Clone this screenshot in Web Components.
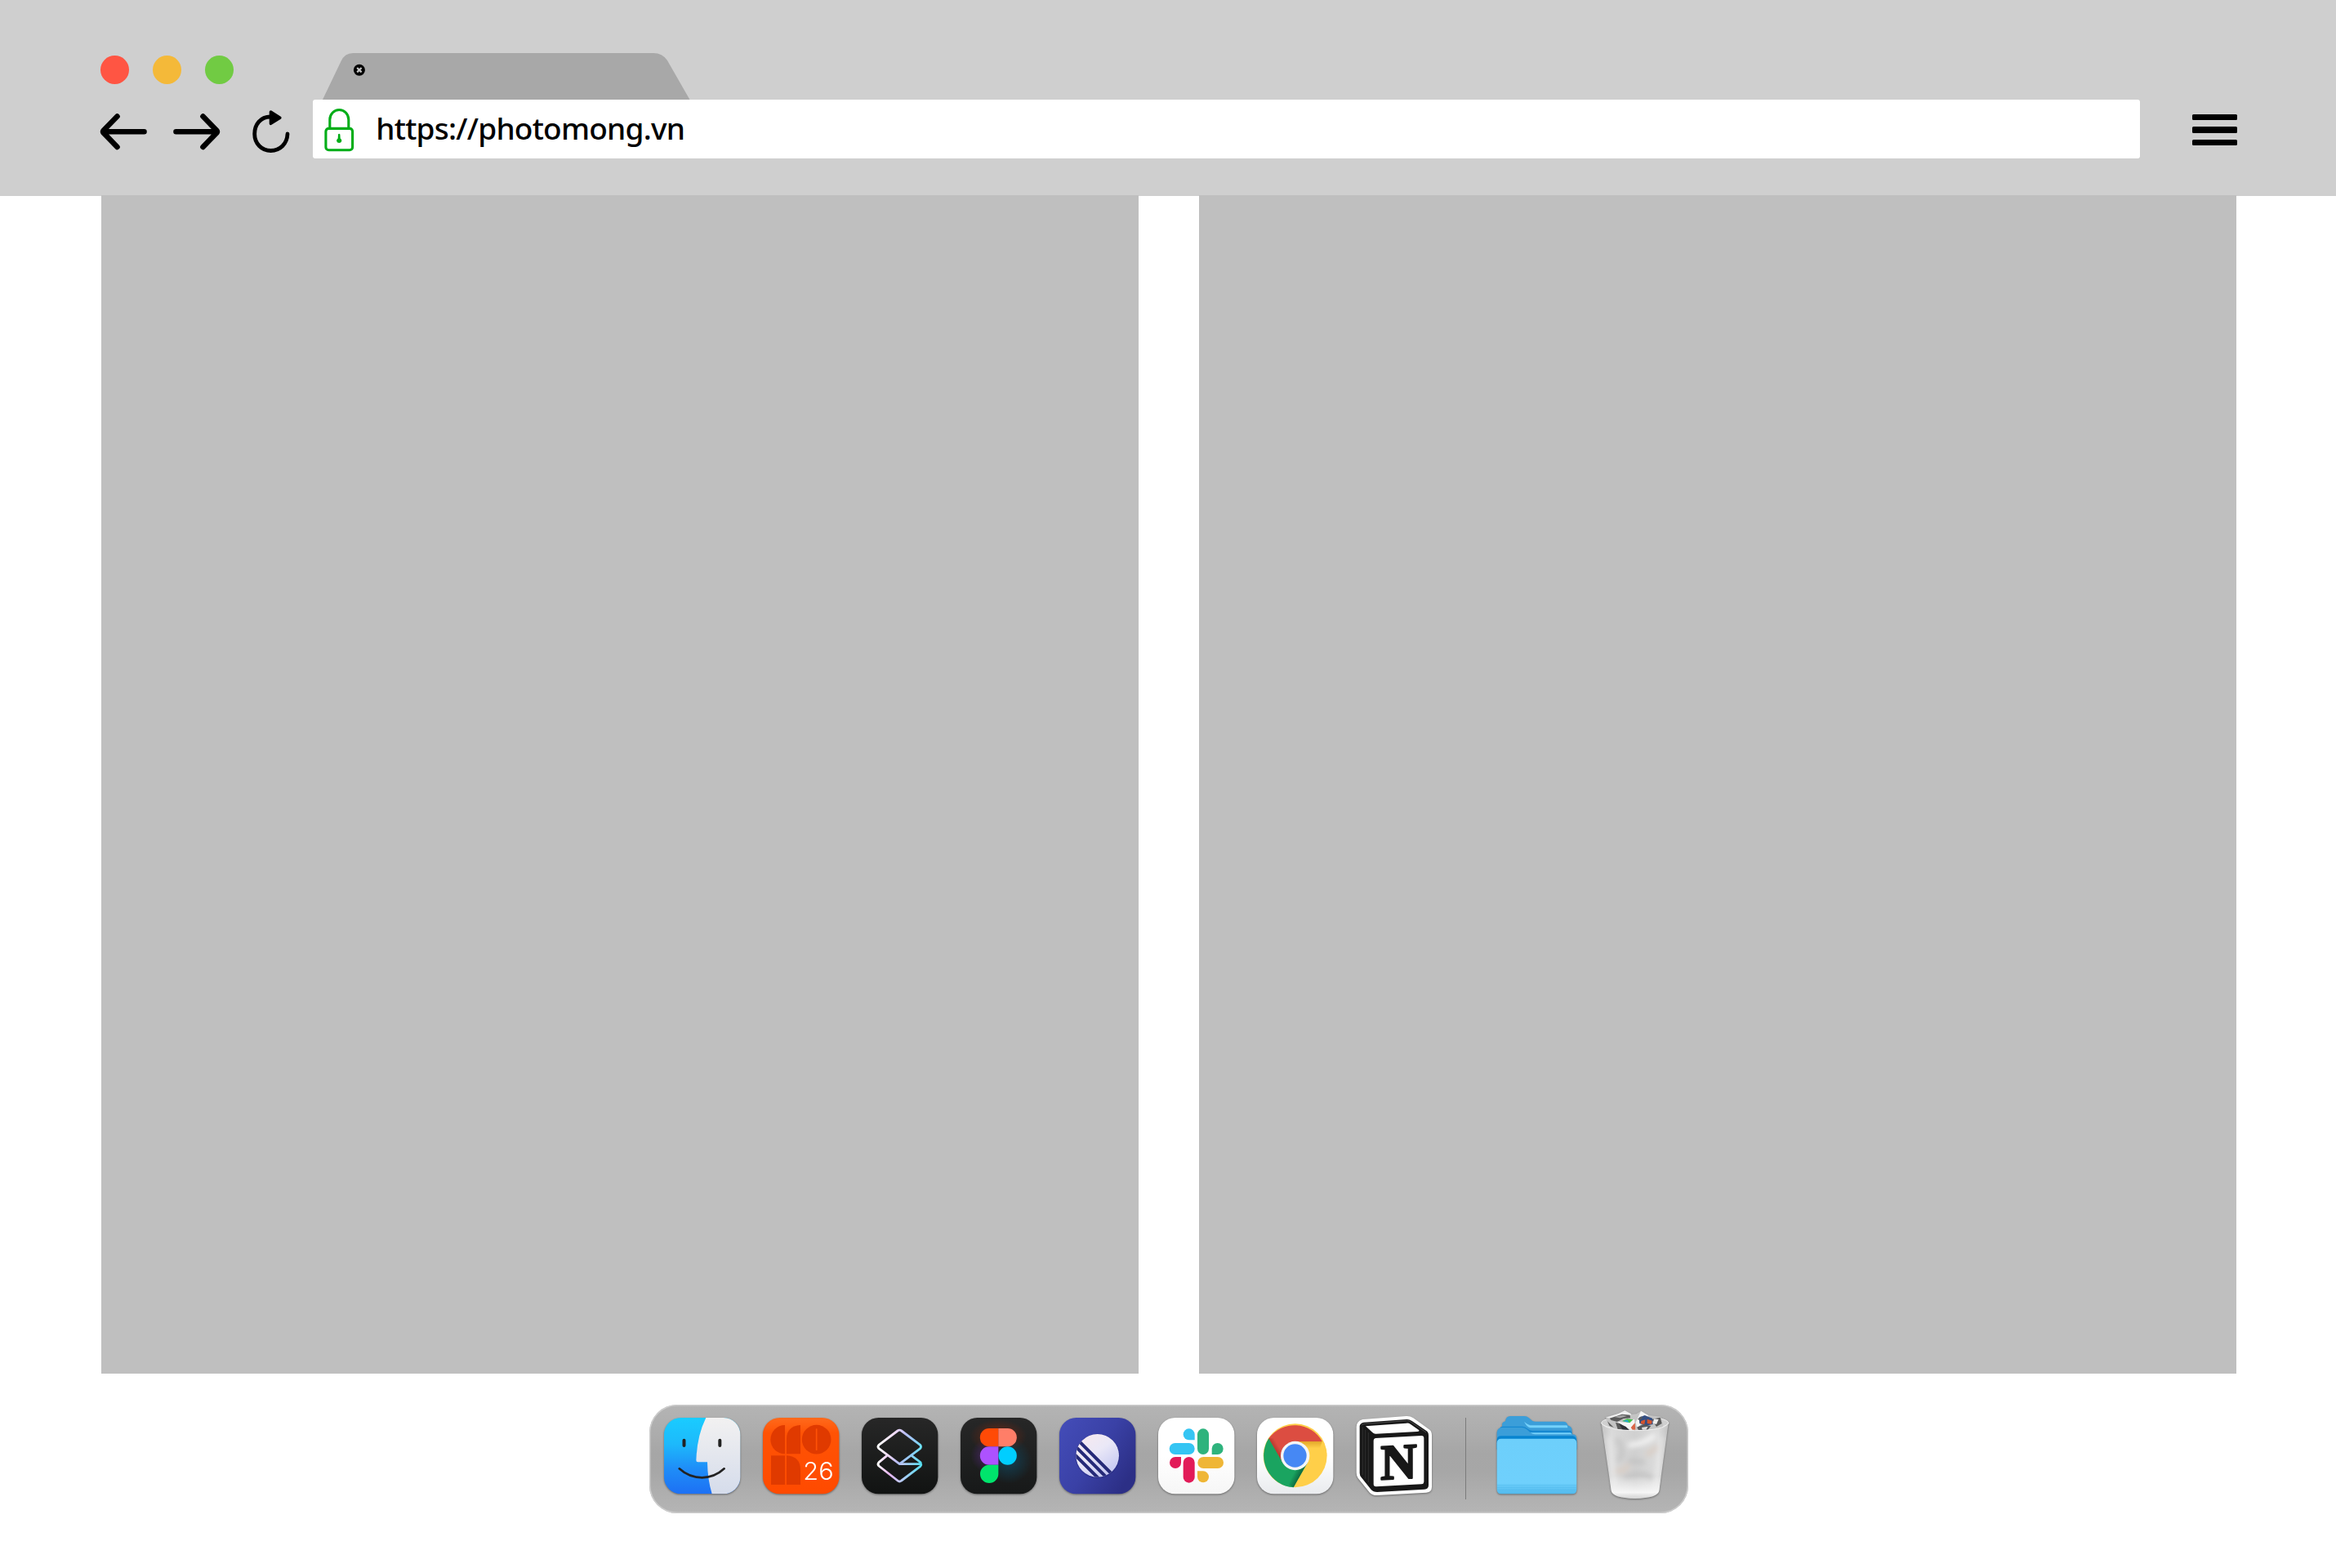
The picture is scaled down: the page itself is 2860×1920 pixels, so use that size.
<!DOCTYPE html>
<html lang="en">
<head>
<meta charset="utf-8">
<title>photomong.vn</title>
<style>
html,body{margin:0;width:2860px;height:1920px;overflow:hidden;background:#fff}
</style>
</head>
<body>
<browser-window>
  <browser-header slot="header"></browser-header>
  <photo-panel></photo-panel>
  <photo-panel></photo-panel>
  <app-dock slot="dock"></app-dock>
</browser-window>
<script>
const define = (name, css, html) => customElements.define(name, class extends HTMLElement {
  constructor(){
    super();
    this.attachShadow({mode:'open'}).innerHTML = `<style>${css} svg{display:block;overflow:visible}</style>${html}`;
  }
});

define('browser-window', `
:host{display:flex;flex-direction:column;width:2860px;height:1920px;background:#fff}
main{display:flex;gap:74px;padding:0 122px 0 124px;height:1443px;margin-top:-1px}
.dock{display:flex;padding:38px 0 0 795px}`,
`<slot name="header"></slot><main><slot></slot></main><div class="dock"><slot name="dock"></slot></div>`);

define('photo-panel', `:host{display:block;flex:1;background:#bfbfbf}`, ``);

define('traffic-lights', `
:host{display:flex;gap:28.900px;padding:0 0 0 123px}
i{flex:none;width:35px;height:35px;border-radius:50%;background:#ff5543}
i:nth-of-type(2){background:#f4b939}
i:nth-of-type(3){background:#71cb43}`, `<i></i><i></i><i></i>`);

define('browser-tab', `:host{display:block}`, `
<svg width="450" height="57" viewBox="395 65 450 57">
<path d="M395 122L417.500 75Q422 65 432 65H800Q811 65 817 74L844.500 122Z" fill="#a8a8a8"/>
<circle cx="439.900" cy="85.700" r="7"/><path d="M437.200 83L442.600 88.400M442.600 83L437.200 88.400" stroke="#c4c4c4" stroke-width="2.200"/>
</svg>`);

define('nav-buttons', `:host{display:flex;width:260px;height:72px}`, `
<svg width="260" height="72" viewBox="123 122 260 72" fill="none" stroke="#000" stroke-width="6.600" stroke-linecap="round" stroke-linejoin="round">
<path d="M176.500 161.200H127M143.500 142.500L126.500 160Q125.700 161.200 126.500 162.400L143.500 180"/>
<path d="M215.500 161.200H265M248.500 142.500L265.500 160Q266.300 161.200 265.500 162.400L248.500 180"/>
<path d="M331 143C319 143 311.700 152.500 311.700 164C311.700 176 320.500 184.500 331.500 184.500C343 184.500 351.500 176 352 164" stroke-width="4.800"/>
<path d="M331.500 137L342.800 144.200L331.500 151.300Z" fill="#000" stroke-width="3.600"/>
</svg>`);

define('address-bar', `
:host{display:flex;align-items:flex-start;box-sizing:border-box;width:2237px;height:72px;background:#fff;border-radius:3px;padding:11px 0 0 14px}
span{font:500 37px/50px "Noto Sans","Open Sans",sans-serif;letter-spacing:-.76px;margin:-1px 0 0 27.300px;white-space:nowrap;color:#000}`, `
<svg width="36" height="52" viewBox="397 133 36 52" fill="none" stroke="#00ad17" stroke-width="3.100">
<path d="M403.800 157V146.500A11.500 12 0 0 1 426.800 146.500V157"/>
<rect x="398.900" y="157.400" width="32.700" height="26.300" rx="3.500"/>
<path d="M414 164.500Q415.200 163 416.400 164.500L416.700 169.500Q418.700 171 418.300 172.800Q417.700 175 415.200 175Q412.700 175 412.100 172.800Q411.700 171 413.700 169.500Z" fill="#00ad17" stroke="none"/>
</svg><span>https://photomong.vn</span>`);

define('menu-button', `:host{display:flex;flex-direction:column;gap:8px;padding-top:17.500px}
i{width:54.500px;height:7.600px;border-radius:1.500px;background:#000}`, `<i></i><i></i><i></i>`);

define('browser-header', `
:host{display:flex;flex-direction:column;box-sizing:border-box;width:2860px;height:240px;background:#cfcfcf;padding-top:65px}
.top{display:flex;height:57px}
traffic-lights{width:163px;padding-top:3px;margin-right:109px}
.bar{display:flex;padding-left:123px;height:72px}
menu-button{margin-left:64px}`, `
<div class="top"><traffic-lights></traffic-lights><browser-tab></browser-tab></div>
<div class="bar"><nav-buttons></nav-buttons><address-bar></address-bar><menu-button></menu-button></div>`);

/* App icons are drawn on a 280-unit tile. */
const icon = (name, view, html, w = 93.33, h = 93.33) => define('icon-' + name,
  `:host{display:block;width:${w}px;height:${h}px;filter:drop-shadow(0 1px 1px #0006)}`,
  `<svg width="${w}" height="${h}" viewBox="${view}">${html}</svg>`);

icon('finder', '98 108 280 280', `
<defs><linearGradient id="b" x2="0" y2="1"><stop offset="0" stop-color="#1accff"/><stop offset=".35" stop-color="#1db9fb"/><stop offset=".65" stop-color="#1f8ff8"/><stop offset="1" stop-color="#1d70f4"/></linearGradient>
<linearGradient id="w" x2="0" y2="1"><stop offset="0" stop-color="#f2f1f1"/><stop offset="1" stop-color="#d5dceb"/></linearGradient>
<clipPath id="c"><rect x="98" y="108" width="280" height="280" rx="62"/></clipPath></defs>
<g clip-path="url(#c)"><rect x="98" y="108" width="280" height="280" fill="url(#b)"/>
<path d="M252 108Q219 175 216 264Q216 271 222 271H257Q258 335 274 388H380V108Z" fill="url(#w)"/></g>
<g fill="none" stroke="#222" stroke-linecap="round"><path d="M171.500 191V210M303 191V210" stroke-width="12"/><path d="M154 295Q190 328 238 328Q285 327 319 295" stroke-width="8"/></g>`);

icon('orange', '462 108 280 280', `
<defs><linearGradient id="o" x2="0" y2="1"><stop offset="0" stop-color="#ff6a1c"/><stop offset=".2" stop-color="#ff5305"/><stop offset="1" stop-color="#ff4a00"/></linearGradient></defs>
<rect x="462" y="108" width="280" height="280" rx="62" fill="url(#o)"/>
<g fill="#e03a00"><path d="M543 135V241A53 53 0 0 1 543 135Z"/><path d="M600 135V241H549V186Q549 139 600 135Z"/><circle cx="659" cy="188" r="53.500"/><path d="M492 247H543V354H492Z"/><path d="M549 247Q600 250 600 300V354H549Z"/></g>
<path d="M659 148V228" stroke="#ff5208" stroke-width="5"/>
<text x="610" y="336" font-family="Inter,'Liberation Sans',sans-serif" font-size="91" font-weight="300" fill="#fff" textLength="112" lengthAdjust="spacingAndGlyphs">26</text>`);

icon('stack', '75 78 280 280', `
<defs><linearGradient id="k" x2="0" y2="1"><stop offset="0" stop-color="#272727"/><stop offset="1" stop-color="#111312"/></linearGradient>
<linearGradient id="s" gradientUnits="userSpaceOnUse" x1="135" y1="180" x2="292" y2="225"><stop offset="0" stop-color="#fff"/><stop offset=".3" stop-color="#f0d9f8"/><stop offset=".5" stop-color="#bdbdf5"/><stop offset=".8" stop-color="#8bcdf8"/><stop offset="1" stop-color="#5feaf6"/></linearGradient>
<linearGradient id="t" gradientUnits="userSpaceOnUse" x1="135" y1="230" x2="294" y2="250"><stop offset="0" stop-color="#fff"/><stop offset=".3" stop-color="#e9b4f2"/><stop offset=".55" stop-color="#c2c8f6"/><stop offset="1" stop-color="#56def0"/></linearGradient></defs>
<rect x="75" y="78" width="280" height="280" rx="62" fill="url(#k)"/>
<g fill="none" stroke-width="8.500" stroke-linejoin="round"><path d="M168 217L138 242Q132 249 138 255L207 309Q214 315 221 309L290 257Q298 248 288 248H214M258 217L288 240Q294 244 291 249" stroke="url(#t)"/>
<path d="M207 126Q214 121 221 126L290 178Q295 185 290 191L214 248L138 191Q132 185 138 178Z" stroke="url(#s)"/></g>`);

icon('figma', '438 78 280 280', `
<defs><linearGradient id="k" x2="0" y2="1"><stop offset="0" stop-color="#272727"/><stop offset="1" stop-color="#171919"/></linearGradient>
<radialGradient id="r"><stop offset="0" stop-color="#a32a08" stop-opacity=".55"/><stop offset="1" stop-color="#a32a08" stop-opacity="0"/></radialGradient>
<radialGradient id="u"><stop offset="0" stop-color="#075f85" stop-opacity=".5"/><stop offset="1" stop-color="#075f85" stop-opacity="0"/></radialGradient>
<radialGradient id="p"><stop offset="0" stop-color="#6b2aa0" stop-opacity=".5"/><stop offset="1" stop-color="#6b2aa0" stop-opacity="0"/></radialGradient></defs>
<rect x="438" y="78" width="280" height="280" rx="62" fill="url(#k)"/>
<ellipse cx="577" cy="146" rx="105" ry="62" fill="url(#r)"/><circle cx="615" cy="235" r="85" fill="url(#u)"/><circle cx="535" cy="217" r="60" fill="url(#p)"/>
<path d="M577 117V184H543A33.500 33.500 0 0 1 543 117Z" fill="#ff4a06"/><path d="M577 117H611A33.500 33.500 0 0 1 611 184H577Z" fill="#ff7e68"/>
<path d="M577 184V251H543A33.500 33.500 0 0 1 543 184Z" fill="#ad52ff"/><circle cx="611" cy="217.500" r="33.500" fill="#00ceff"/>
<path d="M577 251V285A33.500 33.500 0 1 1 543 251Z" fill="#00e46c"/>`);

icon('linear', '81 78 280 280', `
<defs><linearGradient id="l" x2="1" y2=".65"><stop offset="0" stop-color="#444db9"/><stop offset=".55" stop-color="#3a41a6"/><stop offset="1" stop-color="#2c2f86"/></linearGradient>
<linearGradient id="m" x2=".7" y2="1"><stop offset="0" stop-color="#f9e9ee"/><stop offset=".5" stop-color="#eae8f7"/><stop offset="1" stop-color="#c5c8f2"/></linearGradient><clipPath id="c"><circle cx="221" cy="217" r="79"/></clipPath></defs>
<rect x="81" y="78" width="280" height="280" rx="62" fill="url(#l)"/>
<circle cx="221" cy="219" r="82" fill="#1c1f6e" opacity=".3"/>
<circle cx="221" cy="217" r="79" fill="url(#m)"/>
<g clip-path="url(#c)" stroke="#252a78" stroke-width="12"><path d="M150 161L280 291M138 181L260 303M130 206L230 306" /></g>`);

icon('slack', '444 78 280 280', `
<defs><linearGradient id="w" x2="0" y2="1"><stop offset=".5" stop-color="#fff"/><stop offset="1" stop-color="#f6f6f6"/></linearGradient></defs>
<rect x="444" y="78" width="280" height="280" rx="62" fill="url(#w)"/>
<g fill="#35c5f3"><path d="M578 160V139A21 21 0 1 0 557 160Z"/><rect x="485" y="171" width="93" height="42" rx="21"/></g>
<g fill="#2eb37d"><rect x="588" y="118" width="42" height="95" rx="21"/><path d="M641 213V192A21 21 0 1 1 662 213Z"/></g>
<g fill="#e21b58"><path d="M528 222V243A21 21 0 1 1 507 222Z"/><rect x="536" y="222" width="42" height="95" rx="21"/></g>
<g fill="#efb636"><rect x="589" y="222" width="95" height="42" rx="21"/><path d="M588 274H609A21 21 0 1 1 588 295Z"/></g>`);

icon('chrome', '418 78 280 280', `
<defs><linearGradient id="w" x2="0" y2="1"><stop offset=".5" stop-color="#fff"/><stop offset="1" stop-color="#e9ebee"/></linearGradient>
<linearGradient id="d" gradientUnits="userSpaceOnUse" x1="485" y1="200" x2="502" y2="190"><stop offset="0" stop-color="#9e2d22" stop-opacity=".65"/><stop offset="1" stop-color="#9e2d22" stop-opacity="0"/></linearGradient>
<linearGradient id="y" gradientUnits="userSpaceOnUse" x1="0" y1="165" x2="0" y2="190"><stop offset="0" stop-color="#d99a20" stop-opacity=".75"/><stop offset="1" stop-color="#d99a20" stop-opacity="0"/></linearGradient>
<linearGradient id="e" gradientUnits="userSpaceOnUse" x1="578" y1="289" x2="555" y2="277"><stop offset="0" stop-color="#064f31" stop-opacity=".7"/><stop offset="1" stop-color="#064f31" stop-opacity="0"/></linearGradient></defs>
<rect x="418" y="78" width="280" height="280" rx="62" fill="url(#w)"/>
<circle cx="558" cy="217" r="117" fill="#ffcf49"/>
<path d="M558 165H657.500L640 215L590 217Z" fill="url(#y)"/>
<path d="M461 154A117 117 0 0 0 552 334L603 244L558 217Z" fill="#1aa460"/>
<path d="M603 244L552 334L535 325L558 260Z" fill="url(#e)"/>
<path d="M461 154A117 117 0 0 1 657.500 165H558L513 244Z" fill="#dc4d41"/>
<path d="M461 154L513 244L530 210L500 154Z" fill="url(#d)"/>
<circle cx="558" cy="217.500" r="53" fill="#f5f6f7"/><circle cx="557.500" cy="217.500" r="42.500" fill="#4688f4"/>`);

icon('notion', '61 78 280 280', `
<path d="M63 112Q64 89 86 84L246 72Q260 71 272 79L328 119Q340 126 340 142V332Q340 351 320 353L140 363Q123 364 112 353L69 300Q63 292 63 280Z" fill="#fff"/>
<path d="M75 108Q77 97 91 95L247 84Q257 83 267 90L320 126Q328 131 328 143V326Q328 339 313 341L139 351Q125 351 117 342L81 297Q75 290 75 281Z" fill="#181818"/>
<path d="M97 109L247 98Q255 97 262 102L292 123Q297 128 286 129L135 137Q128 138 122 132Z" fill="#fff"/>
<path d="M133 153L302 144Q311 144 311 153V312Q311 321 302 322L135 331Q126 331 126 322V162Q126 154 133 153Z" fill="#fff"/>
<path d="M86 112V288M96 122V302M107 132V315" stroke="#303030" stroke-width="3" fill="none"/>
<path d="M82 105Q86 101 95 100L248 89Q256 88 264 94L319 132" stroke="#4a4a4a" stroke-width="3" fill="none"/>
<text transform="translate(152 305) skewY(-3)" font-family="'Liberation Serif',serif" font-weight="700" font-size="184" textLength="133" lengthAdjust="spacingAndGlyphs" fill="#181818" stroke="#181818" stroke-width="7" stroke-linejoin="round">N</text>`);

icon('folder', '66 102 296 288', `
<defs><linearGradient id="f" x2="0" y2="1"><stop offset="0" stop-color="#6dcffb"/><stop offset=".8" stop-color="#6fd0fc"/><stop offset="1" stop-color="#51b9ec"/></linearGradient></defs>
<path d="M87 180V134Q87 124 99 121Q102 102 117 102H169Q178 102 185 108L198 119Q203 122 211 122H312Q326 122 328 136Q344 140 344 155V190H87Z" fill="#3b9ed9"/>
<path d="M168 122Q183 136 198 136H325Q328 139 328 145H190Q178 142 168 122Z" fill="#75d1fa"/>
<path d="M80 145Q80 140 90 140H162Q172 141 180 148Q189 155 198 155H340Q344 160 344 168H80Z" fill="#1688d1"/>
<path d="M160 145Q180 163 194 163H338Q343 165 344 171H190Z" fill="#75d1fa"/>
<path d="M68 210V163Q69 147 84 144H160Q169 144 177 150L190 162Q199 169 208 169H345Q361 169 361 185V220H68Z" fill="#3b9ed9"/>
<path d="M68 225V188Q69 175 84 175H347Q361 178 361 195V225Z" fill="#0784d0"/>
<path d="M68 202Q68 185 84 185H346Q361 185 361 202V371Q361 388 345 388H84Q68 388 68 371Z" fill="url(#f)"/>
<path d="M69 356H360M69 364H360M70 373H359" stroke="#4cb3e8" stroke-width="2" opacity=".65"/>`, 98.67, 96);

icon('trash', '452 80 250 324', `
<defs><linearGradient id="g" x2="1" y2="0"><stop offset="0" stop-color="#c4c4c4"/><stop offset=".15" stop-color="#dadada"/><stop offset=".5" stop-color="#d0d0d0"/><stop offset=".85" stop-color="#dcdcdc"/><stop offset="1" stop-color="#c2c2c2"/></linearGradient>
<linearGradient id="h" x2="0" y2="1"><stop offset=".7" stop-color="#fff" stop-opacity="0"/><stop offset=".92" stop-color="#fff" stop-opacity=".8"/><stop offset="1" stop-color="#ddd" stop-opacity=".4"/></linearGradient>
<filter id="z" filterUnits="userSpaceOnUse" x="440" y="80" width="280" height="330"><feGaussianBlur stdDeviation="9"/></filter></defs>
<ellipse cx="577" cy="126" rx="123" ry="25" fill="#cfcfcf" stroke="#f1f1f1" stroke-width="3"/>
<path d="M470 104L516 92L540 81L565 94L582 93L599 82L625 97L672 103L682 142L640 153H510L478 136Z" fill="#c4c4c4"/>
<path d="M472 106L516 92L540 81L563 93L560 100L528 97L490 110Z" fill="#f0f0f0"/>
<path d="M484 109L530 94L559 97L560 108L535 110L512 122L490 116ZM476 120L499 142L484 137ZM506 124L541 134L556 152L514 150ZM638 113L670 106L676 128L656 140L645 123Z" fill="#5a5a5a"/>
<path d="M500 104L533 97L548 101L522 108Z" fill="#a5a5a5"/>
<path d="M512 121L548 125L575 112L579 151H560L532 135Z" fill="#f5f5f5"/>
<path d="M530 119L549 111L570 114L558 126Z" fill="#44c34b"/><path d="M533 119L549 115L556 124Z" fill="#24a9dc"/>
<path d="M562 143L577 126L579 151H568Z" fill="#d96647"/><path d="M519 129L544 140L554 152H532Z" fill="#303338"/>
<path d="M580 124L599 82L627 99L610 120L585 146Z" fill="#f4f4f4"/>
<path d="M592 106L613 98L641 109L643 131L618 136L594 128Z" fill="#344e82"/><path d="M600 119L615 114L612 131L598 129ZM622 112L640 118L638 130L622 128Z" fill="#d5542d"/><path d="M584 142L608 131L636 137L624 152H590ZM587 112L600 102L605 108L595 117Z" fill="#55585c"/>
<path d="M602 143L625 139L618 151H604Z" fill="#dedede"/>
<path d="M647 111L664 113L656 131L643 127Z" fill="#eee"/>
<path d="M454 127Q470 153 577 154Q685 153 700 127L666 374Q663 402 577 404Q493 402 490 374Z" fill="url(#g)"/>
<g filter="url(#z)" fill="none" stroke-linecap="round"><path d="M560 207Q610 204 645 175" stroke="#f4f4f4" stroke-width="18"/><path d="M515 190Q540 230 520 262M545 325Q600 302 638 328M560 265L605 270" stroke="#bdbdbd" stroke-width="20" opacity=".6"/><path d="M512 302Q540 303 550 285M625 240L655 217" stroke="#dacbbf" stroke-width="20" opacity=".7"/><path d="M480 180L502 353M678 180L653 354" stroke="#efefef" stroke-width="9"/></g>
<path d="M454 127Q470 153 577 154Q685 153 700 127L666 374Q663 402 577 404Q493 402 490 374Z" fill="url(#h)"/>
<path d="M454 127Q470 153 577 154Q685 153 700 127" fill="none" stroke="#f1f1f1" stroke-width="3"/>`, 83.33, 108);

define('dock-divider', `:host{display:block;width:1.500px;height:100px;background:#7b7b7b}`, ``);

define('app-dock', `
:host{display:flex;box-sizing:border-box;width:1271.500px;height:133px;border-radius:34px;padding:16px 0 0 17.700px;
background:linear-gradient(#b4b4b4,#acacac 28%,#a6a6a6 45%,#a7a7a7 62%,#adadad 78%,#b5b5b5);
box-shadow:inset 0 0 0 1.500px #ccc}
.apps{display:flex;gap:27.700px}
dock-divider{margin:0 37px 0 40.500px}
icon-folder{margin:-2px 29.500px 0 0}
icon-trash{margin-top:-9.300px}`, `
<div class="apps"><icon-finder></icon-finder><icon-orange></icon-orange><icon-stack></icon-stack><icon-figma></icon-figma><icon-linear></icon-linear><icon-slack></icon-slack><icon-chrome></icon-chrome><icon-notion></icon-notion></div>
<dock-divider></dock-divider><icon-folder></icon-folder><icon-trash></icon-trash>`);
</script>
</body>
</html>
